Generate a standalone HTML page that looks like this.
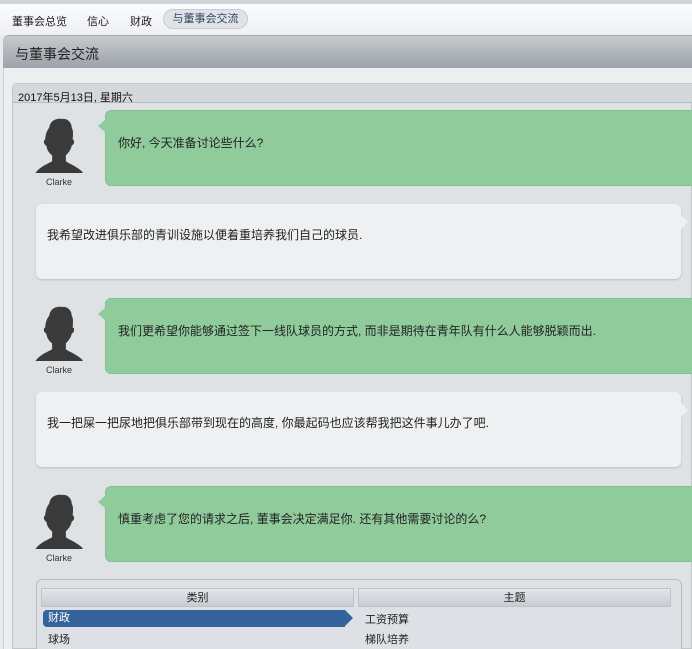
<!DOCTYPE html>
<html><head><meta charset="utf-8"><style>
*{margin:0;padding:0;box-sizing:border-box}
html,body{width:692px;height:649px;overflow:hidden}
body{background:#e9ebee;font-family:"Liberation Sans","Noto Sans CJK SC",sans-serif;font-size:12px;color:#222;position:relative}
.abs{position:absolute}
.top{left:0;top:0;width:692px;height:4px;background:#d0d3d7}
.tabs{left:0;top:4px;width:692px;height:31px;background:linear-gradient(#fafbfc,#eef0f3)}
.tab{position:absolute;top:9px;font-size:11px;color:#222}
.tabsel{position:absolute;left:163px;top:5px;width:85px;height:20px;border-radius:10px;background:#dfe3e8;border:1px solid #c8ccd2;font-size:11px;color:#34455e;text-align:center;line-height:18px}
.hdr{left:3px;top:35px;width:689px;height:33px;background:linear-gradient(#c6cace,#9ca2aa);border-top:1px solid #a3a7ac;border-radius:6px 0 0 0;font-size:14px;color:#222;padding:8px 0 0 12px}
.outer{left:3px;top:68px;width:689px;height:581px;background:#eceef0;border-left:1px solid #cfd2d6}
.inner{left:12px;top:83px;width:680px;height:566px;background:#dfe2e5;border:1px solid #c2c6cb;border-radius:5px 0 0 0}
.date{left:13px;top:84px;width:679px;height:19px;background:#d4d8dc;border-bottom:1px solid #b9bdc2;font-size:11px;padding:5px 0 0 5px;color:#111}
.g{position:absolute;left:105px;width:600px;height:76px;background:#90cb9c;border-radius:6px;border:1px solid #84bf90;font-size:12px;padding-left:12px;line-height:64px}
.g:before{content:"";position:absolute;left:-8px;top:8px;border-style:solid;border-width:7px 8px 7px 0;border-color:transparent #90cb9c transparent transparent}
.w{position:absolute;left:36px;width:645px;height:75px;background:#eef0f2;border-radius:6px;box-shadow:0 1px 2px #b8bcc1;font-size:12px;padding-left:11px;line-height:62px}
.w:after{content:"";position:absolute;right:-7px;top:11px;border-style:solid;border-width:7px 0 7px 7px;border-color:transparent transparent transparent #eef0f2}
.av{position:absolute;left:35px;width:48px}
.av svg{display:block}
.av span{display:block;text-align:center;font-size:9px;color:#333;margin-top:4px}
.bot{left:36px;top:579px;width:646px;height:75px;background:#dde1e5;border:1px solid #b9bdc2;border-radius:6px}
.th{position:absolute;top:588px;height:19px;background:linear-gradient(#e2e5e9,#c9cdd3);border:1px solid #bfc3c8;font-size:11px;text-align:center;line-height:19px}
.sel{left:43px;top:610px;width:302px;height:17px;background:#33639a;border-radius:4px 0 0 4px;color:#fff;font-size:11px;padding-left:5px;line-height:17px}
.sel:after{content:"";position:absolute;right:-8px;top:0;border-style:solid;border-width:8.5px 0 8.5px 8px;border-color:transparent transparent transparent #33639a}
.t{position:absolute;font-size:11px}
</style></head><body>
<div class="abs top"></div>
<div class="abs tabs">
<div class="tab" style="left:12px">董事会总览</div>
<div class="tab" style="left:87px">信心</div>
<div class="tab" style="left:130px">财政</div>
<div class="tabsel">与董事会交流</div>
</div>
<div class="abs hdr">与董事会交流</div>
<div class="abs outer"></div>
<div class="abs inner"></div>
<div class="abs date">2017年5月13日, 星期六</div>

<svg width="0" height="0" style="position:absolute"><defs><symbol id="sil" viewBox="0 0 48 56"><path fill="#3a3a3a" d="M14 10 C15 2 22 0 27 1 C32 0 37 4 37 10 C39 13 38 18 38 22 C40 22 40 27 37 28 C36 33 33 36 31 38 L31 44 C35 47 42 49 48 55 L48 56 L0 56 C5 49 12 47 17 44 L17 38 C14 36 12 33 11 28 C8 27 8 22 10 22 C10 17 12 12 14 10 Z"/></symbol></defs></svg>

<div class="av" style="top:118px"><svg width="48" height="55"><use href="#sil"/></svg><span>Clarke</span></div>
<div class="g" style="top:110px">你好, 今天准备讨论些什么?</div>
<div class="w" style="top:204px">我希望改进俱乐部的青训设施以便着重培养我们自己的球员.</div>
<div class="av" style="top:306px"><svg width="48" height="55"><use href="#sil"/></svg><span>Clarke</span></div>
<div class="g" style="top:298px">我们更希望你能够通过签下一线队球员的方式, 而非是期待在青年队有什么人能够脱颖而出.</div>
<div class="w" style="top:392px">我一把屎一把尿地把俱乐部带到现在的高度, 你最起码也应该帮我把这件事儿办了吧.</div>
<div class="av" style="top:494px"><svg width="48" height="55"><use href="#sil"/></svg><span>Clarke</span></div>
<div class="g" style="top:486px">慎重考虑了您的请求之后, 董事会决定满足你. 还有其他需要讨论的么?</div>

<div class="abs bot"></div>
<div class="th" style="left:41px;width:313px">类别</div>
<div class="th" style="left:358px;width:313px">主题</div>
<div class="abs sel">财政</div>
<div class="t" style="left:48px;top:631px">球场</div>
<div class="t" style="left:365px;top:611px">工资预算</div>
<div class="t" style="left:365px;top:631px">梯队培养</div>
</body></html>
